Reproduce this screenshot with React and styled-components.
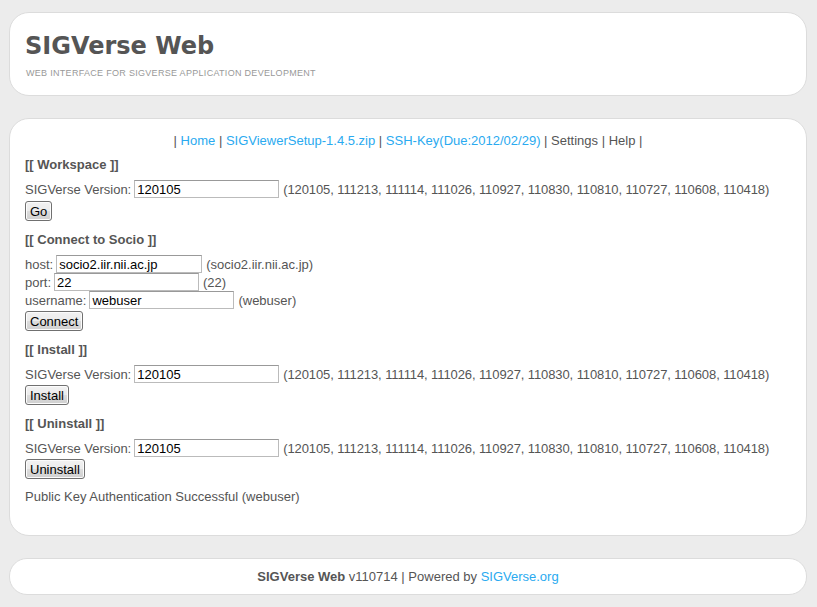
import React from 'react';
import styled, { createGlobalStyle } from 'styled-components';

const GlobalStyle = createGlobalStyle`
  html, body {
    margin: 0;
    padding: 0;
    background: #ececec;
  }
  body {
    font-family: "Liberation Sans", Arial, sans-serif;
    font-size: 13px;
    color: #555;
  }
`;

const Page = styled.div`
  padding: 12px 10px 12px 9px;
  display: flex;
  flex-direction: column;
  gap: 22px;
`;

const Box = styled.div`
  background: #fff;
  border: 1px solid #dcdcdc;
  border-radius: ${(p) => p.radius || '20px'};
  box-sizing: border-box;
  width: 798px;
`;

const Header = styled(Box)`
  height: 84px;
  padding: 18px 15px 0 15px;
`;

const Title = styled.h1`
  margin: 0;
  font-family: "DejaVu Sans", Verdana, sans-serif;
  font-size: 24px;
  font-weight: bold;
  color: #555;
  line-height: 30px;
`;

const Subtitle = styled.div`
  margin: 7px 0 0 1px;
  font-size: 9px;
  letter-spacing: 0.3px;
  text-transform: uppercase;
  color: #999;
`;

const Main = styled(Box)`
  height: 418px;
  padding: 13px 15px 0 15px;
`;

const Nav = styled.div`
  text-align: center;
  line-height: 18px;
  color: #555;
`;

const Link = styled.a`
  color: #2aaaf0;
  text-decoration: none;
`;

const Heading = styled.h3`
  margin: ${(p) => (p.first ? '6px' : '10px')} 0 6px 0;
  font-size: 13px;
  font-weight: bold;
  line-height: 18px;
`;

const Row = styled.div`
  display: flex;
  align-items: center;
  height: 18px;
  white-space: nowrap;
`;

const Label = styled.span`
  margin-right: 3px;
`;

const Hint = styled.span`
  letter-spacing: ${(p) => (p.tight ? '-0.1px' : 'normal')};
`;

const Input = styled.input`
  box-sizing: border-box;
  width: ${(p) => p.w || '145px'};
  height: 18px;
  border: 1px solid #bbb;
  border-top-color: #999;
  padding: 0 2px;
  font-family: "Liberation Sans", Arial, sans-serif;
  font-size: 13px;
  color: #000;
  margin-right: 4px;
  outline: none;
`;

const Button = styled.button`
  display: block;
  margin-top: ${(p) => p.mt || '2px'};
  height: 20px;
  padding: 0 4px;
  font-family: "Liberation Sans", Arial, sans-serif;
  font-size: 13px;
  color: #000;
  border: 1px solid #707070;
  border-radius: 3px;
  background: linear-gradient(#f2f2f2, #ebebeb 50%, #dddddd 50%, #cfcfcf);
  box-shadow: inset 0 0 0 1px #fcfcfc;
`;

const Status = styled.div`
  margin-top: 9px;
  line-height: 18px;
`;

const Footer = styled(Box)`
  height: 37px;
  border-radius: 18px;
  display: flex;
  align-items: center;
  justify-content: center;
`;

const versions = '(120105, 111213, 111114, 111026, 110927, 110830, 110810, 110727, 110608, 110418)';

const VersionRow = () => (
  <Row>
    <Label>SIGVerse Version:</Label>
    <Input defaultValue="120105" />
    <Hint tight>{versions}</Hint>
  </Row>
);

const App = () => (
  <>
    <GlobalStyle />
    <Page>
      <Header>
        <Title>SIGVerse Web</Title>
        <Subtitle>Web interface for SIGVerse application development</Subtitle>
      </Header>
      <Main>
        <Nav>
          | <Link href="#">Home</Link> | <Link href="#">SIGViewerSetup-1.4.5.zip</Link> |{' '}
          <Link href="#">SSH-Key(Due:2012/02/29)</Link> | Settings | Help |
        </Nav>

        <Heading first>[[ Workspace ]]</Heading>
        <VersionRow />
        <Button mt="3px">Go</Button>

        <Heading>[[ Connect to Socio ]]</Heading>
        <Row>
          <Label>host:</Label>
          <Input w="146px" defaultValue="socio2.iir.nii.ac.jp" />
          <Hint>(socio2.iir.nii.ac.jp)</Hint>
        </Row>
        <Row>
          <Label>port:</Label>
          <Input defaultValue="22" />
          <Hint>(22)</Hint>
        </Row>
        <Row>
          <Label>username:</Label>
          <Input defaultValue="webuser" />
          <Hint>(webuser)</Hint>
        </Row>
        <Button>Connect</Button>

        <Heading>[[ Install ]]</Heading>
        <VersionRow />
        <Button>Install</Button>

        <Heading>[[ Uninstall ]]</Heading>
        <VersionRow />
        <Button>Uninstall</Button>

        <Status>Public Key Authentication Successful (webuser)</Status>
      </Main>
      <Footer>
        <span>
          <b>SIGVerse Web</b> v110714 | Powered by <Link href="#">SIGVerse.org</Link>
        </span>
      </Footer>
    </Page>
  </>
);

export default App;
